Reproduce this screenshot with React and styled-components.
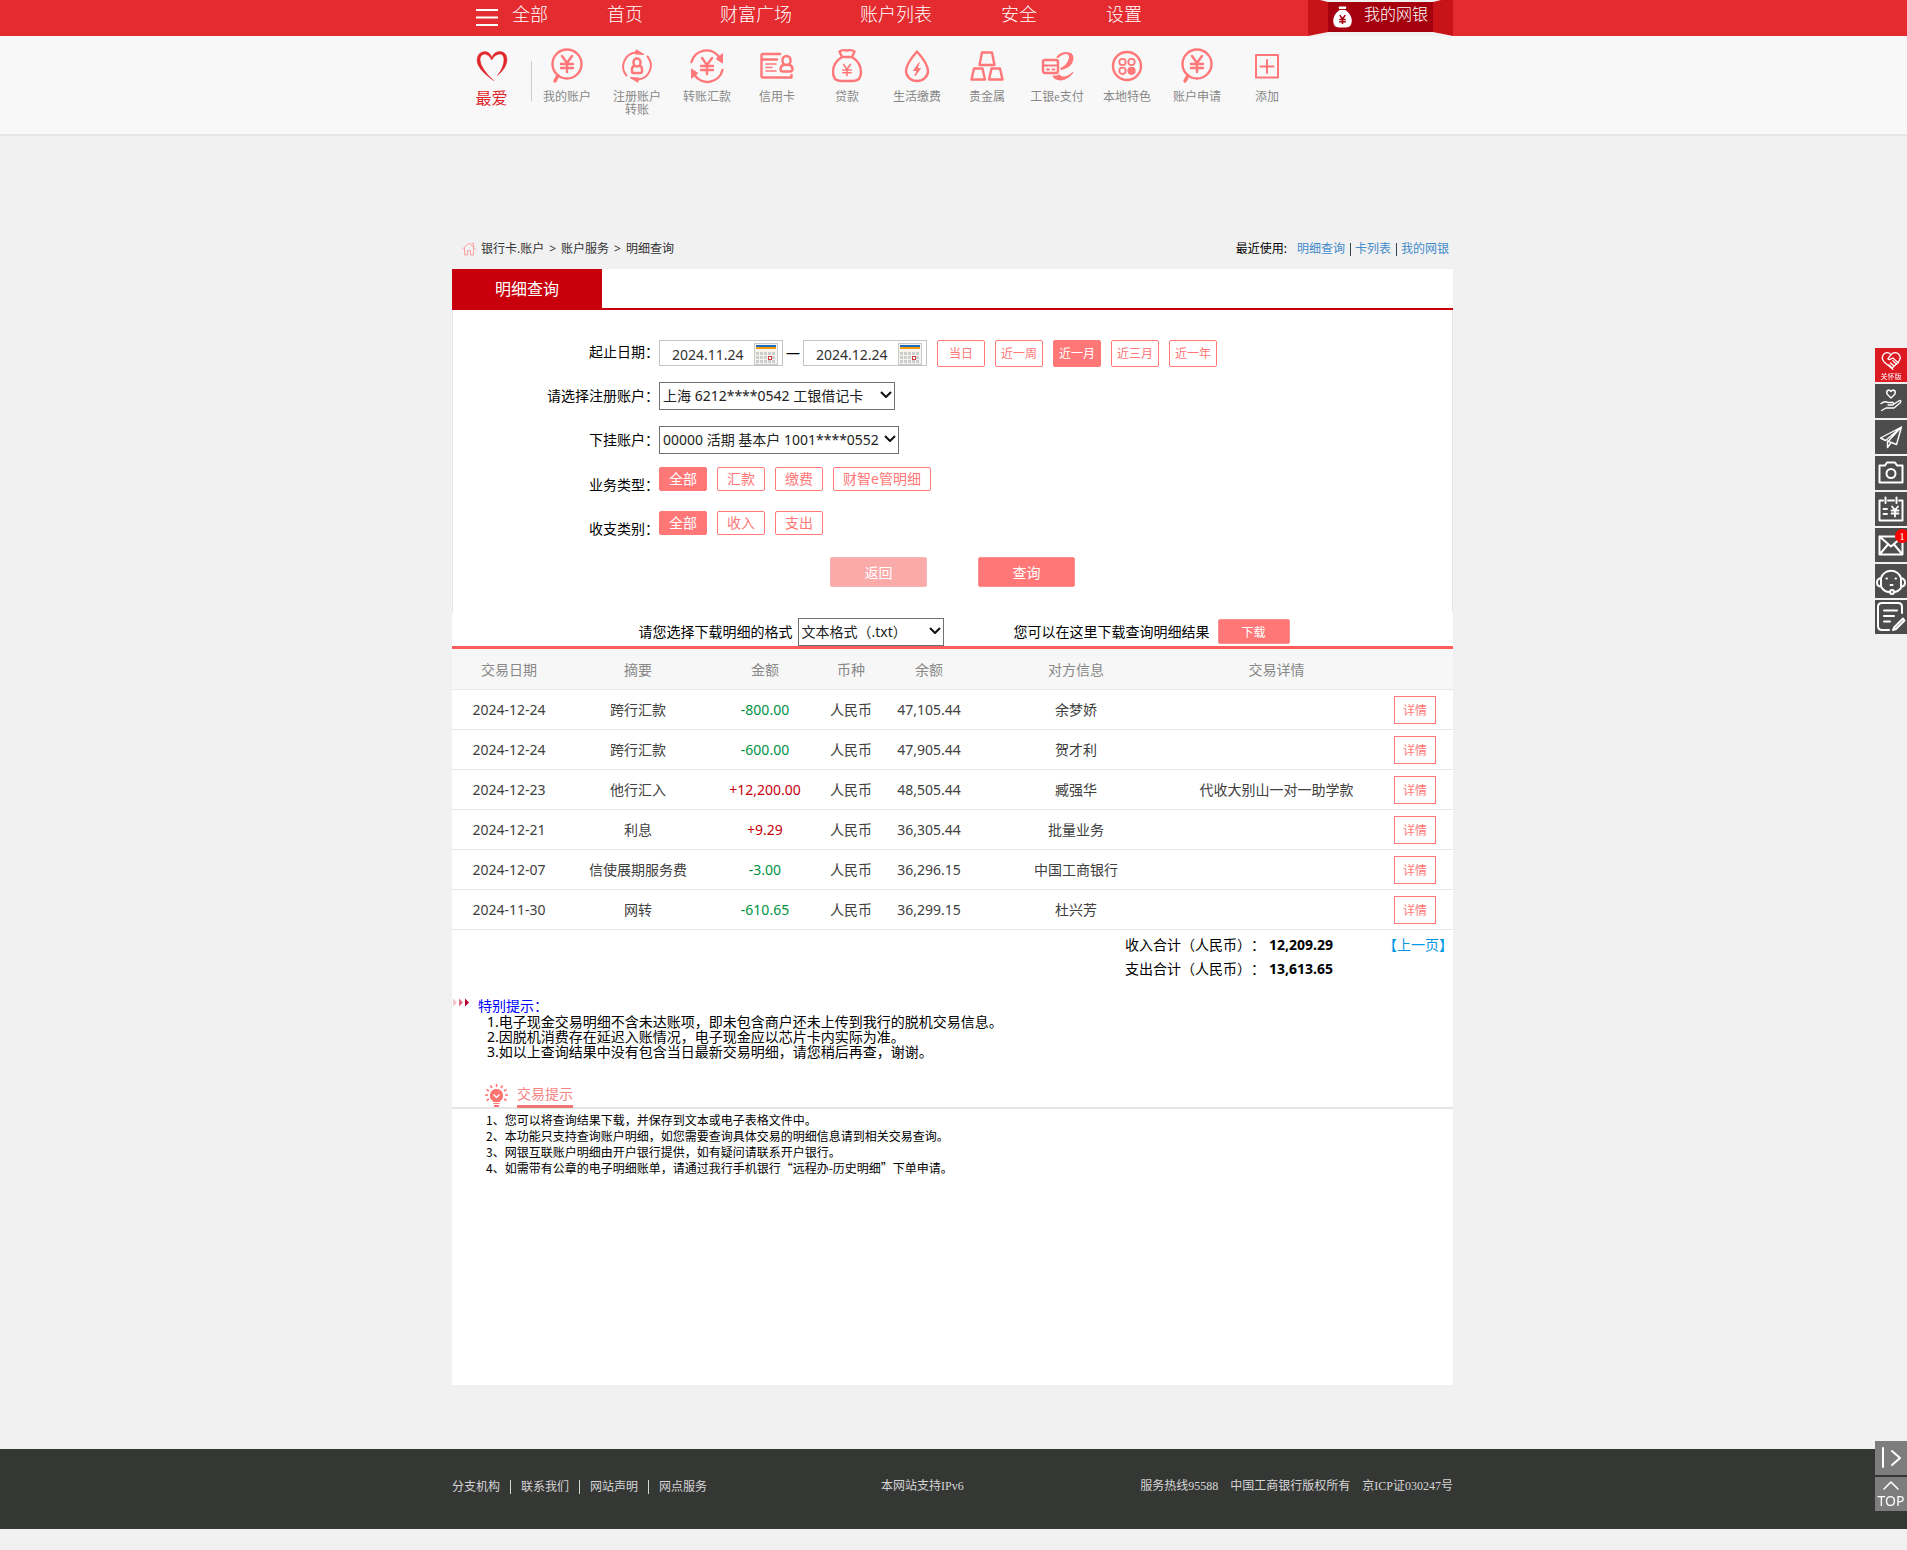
import React from 'react';
import styled, { createGlobalStyle, css } from 'styled-components';

const sans = '"Noto Sans", "Noto Sans CJK SC", sans-serif';
const song = '"Liberation Serif", "Noto Sans CJK SC", serif';

const GlobalStyle = createGlobalStyle`
  *, *::before, *::after { box-sizing: border-box; }
  body {
    margin: 0;
    background: #f1f1f1;
    color: #000;
    font: 14px/20px ${sans};
    text-spacing-trim: space-all;
  }
  button, input, select { font-family: inherit; }
  a { text-decoration: none; }
`;

/* ---------- shared ---------- */

const Container = styled.div`
  width: 1003px;
  max-width: 100%;
  margin: 0 auto;
  padding-right: 2px;
`;

const Icon = styled.svg`
  display: block;
  flex: none;
  fill: none;
  stroke: currentColor;
  stroke-linecap: ${(p) => (p.$flat ? 'butt' : 'round')};
  stroke-linejoin: round;
  stroke-width: ${(p) => p.$stroke || 2};
`;

/* ---------- top bar ---------- */

const TopBar = styled.header`
  background: #e42b2f;
  color: #fff;
  font-family: ${song};
  font-weight: 300;
`;

const TopInner = styled(Container)`
  display: flex;
  justify-content: space-between;
  height: 36px;
`;

const MainNav = styled.nav`
  display: grid;
  grid-template-columns: 36px 95px 113px 140px 141px 105px auto;
  padding-left: 24px;
  line-height: 30px;
`;

const MenuButton = styled.button`
  width: 22px;
  height: 36px;
  padding: 0;
  border: 0;
  background: none;
  color: #fff;
  cursor: pointer;
`;

const MainLink = styled.a`
  color: #fff;
  font-size: 18px;
  white-space: nowrap;
`;

const MyBank = styled.a`
  position: relative;
  display: flex;
  gap: 12px;
  width: 145px;
  height: 36px;
  padding-left: 25px;
  color: #fff;
  font-size: 16px;
  line-height: 30px;
`;

const Ribbon = styled.svg`
  position: absolute;
  inset: 0;
`;

const BagSlot = styled.span`
  position: relative;
  padding-top: 6px;
`;

const MyBankText = styled.span`
  position: relative;
`;

/* ---------- quick links ---------- */

const QuickBar = styled.div`
  height: 100px;
  background: #f8f8f8;
  border-bottom: 2px solid #e5e5e5;
  font-family: ${song};
`;

const QuickInner = styled(Container)`
  display: flex;
`;

const Favorite = styled.a`
  display: flex;
  flex-direction: column;
  align-items: center;
  gap: 8px;
  width: 79px;
  padding: 14px 0 0;
  color: #e0262b;
  font-size: 16px;
`;

const Divider = styled.span`
  width: 1px;
  height: 40px;
  margin-top: 25px;
  background: #ccc;
`;

const QuickLink = styled.a`
  display: flex;
  flex-direction: column;
  align-items: center;
  gap: 7px;
  width: 70px;
  padding-top: 12px;
  color: #ff7778;
`;

const QuickText = styled.span`
  color: #888;
  font-size: 12px;
  line-height: 13px;
  text-align: center;
  white-space: pre-line;
`;

/* ---------- breadcrumb ---------- */

const CrumbBar = styled.div`
  display: flex;
  justify-content: space-between;
  align-items: center;
  height: 42px;
  margin-top: 91px;
  padding: 2px 4px 0 10px;
  font-size: 12px;
`;

const Crumbs = styled.nav`
  display: flex;
  align-items: center;
  gap: 5px;
  color: #333;
`;

const HomeLink = styled.a`
  color: #ffa0a0;
`;

const Recent = styled.div`
  display: flex;
  align-items: center;
`;

const RecentTitle = styled.span`
  margin-right: 10px;
`;

const RecentLink = styled.a`
  color: #428bca;
  & + & {
    margin-left: 5px;
    padding-left: 5px;
    background: linear-gradient(#345, #345) left center / 1px 13px no-repeat;
  }
`;

/* ---------- panel ---------- */

const Panel = styled.main`
  padding-bottom: 209px;
  background: #fff;
`;

const Tabs = styled.div`
  display: flex;
  border-bottom: 2px solid #c7000b;
`;

const Tab = styled.h1`
  width: 150px;
  height: 39px;
  margin: 0;
  background: #c7000b;
  color: #fff;
  font-size: 16px;
  font-weight: 400;
  line-height: 41px;
  text-align: center;
`;

const Form = styled.form`
  padding: 20px 0 26px;
  border: solid #e5e5e5;
  border-width: 0 1px;
`;

const Row = styled.div`
  display: grid;
  grid-template-columns: 206px 1fr;
  height: 44px;
`;

const labelStyle = css`
  line-height: 44px;
  text-align: right;
`;
const RowLabel = styled.label`${labelStyle}`;
const RowTitle = styled.span`
  ${labelStyle}
  line-height: 46px;
`;

const Controls = styled.div`
  display: flex;
  align-items: ${(p) => (p.$top ? 'flex-start' : 'center')};
  gap: 10px;
  padding-top: ${(p) => p.$top || 0}px;
`;

const DateRange = styled.div`
  display: flex;
  align-items: center;
  gap: 3px;
`;

const DateBox = styled.div`
  display: flex;
  width: 124px;
  height: 26px;
  border: 1px solid #c4c4c4;
`;

const DateInput = styled.input`
  width: 94px;
  padding: 2px 0 0 12px;
  border: 0;
  background: none;
  color: #333;
  font-size: 14px;
`;

const CalendarButton = styled.button`
  display: flex;
  align-items: flex-end;
  padding: 0;
  border: 0;
  background: none;
`;

const Pill = styled.button`
  min-width: 48px;
  height: ${(p) => (p.$small ? 27 : 24)}px;
  padding: 0 ${(p) => (p.$small ? 4 : 9)}px;
  border: 1px solid #ff7777;
  border-radius: 2px;
  background: ${(p) => (p.$active ? '#ff7777' : '#fff')};
  color: ${(p) => (p.$active ? '#fff' : '#ff7777')};
  font-size: ${(p) => (p.$small ? 12 : 14)}px;
  line-height: 20px;
  white-space: nowrap;
`;

const SelectBox = styled.div`
  position: relative;
  width: ${(p) => p.$width}px;
`;

const SelectInput = styled.select`
  display: block;
  width: 100%;
  height: 28px;
  padding: 0 0 1px 3px;
  border: 1px solid #707070;
  border-radius: 0;
  appearance: none;
  background: #fff;
  color: #222;
  font-size: 14px;
`;

const SelectArrow = styled(Icon)`
  position: absolute;
  top: 8px;
  right: 3px;
  color: #111;
  pointer-events: none;
`;

const Actions = styled.div`
  display: flex;
  justify-content: center;
  gap: 51px;
  margin-top: 7px;
`;

const SolidButton = styled.button`
  width: ${(p) => (p.$small ? 72 : 97)}px;
  height: ${(p) => (p.$small ? 25 : 30)}px;
  padding: 0;
  border: 1px solid ${(p) => (p.$muted ? '#f9b4b4' : '#ff9090')};
  border-radius: 2px;
  background: ${(p) => (p.$muted ? '#fbaaaa' : '#ff7777')};
  color: #fff;
  font-size: ${(p) => (p.$small ? 12 : 14)}px;
`;

const DownloadBar = styled.div`
  display: flex;
  align-items: flex-start;
  justify-content: center;
  gap: 70px;
  height: 33px;
  padding: 5px 0 0 23px;
`;

const DownloadGroup = styled.div`
  display: flex;
  align-items: center;
  gap: ${(p) => p.$gap}px;
  min-height: 27px;
`;

/* ---------- table ---------- */

const Table = styled.table`
  width: 100%;
  border-top: 3px solid #ff5c5c;
  border-spacing: 0;
  table-layout: fixed;
  color: #404040;
  text-align: center;
`;

const Th = styled.th`
  height: 41px;
  padding: 2px 0 0;
  border-bottom: 1px solid #e8e8e8;
  background: #f7f7f7;
  color: #888;
  font-weight: 400;
`;

const Td = styled.td`
  height: 40px;
  padding: 0;
  border-bottom: 1px solid #e8e8e8;
  color: ${(p) => p.$color || 'inherit'};
`;

const DetailButton = styled.button`
  width: 42px;
  height: 28px;
  padding: 0;
  border: 1px solid #ff7777;
  background: #fff;
  color: #ff7777;
  font-size: 12px;
  vertical-align: middle;
`;

const Totals = styled.div`
  display: flex;
  justify-content: flex-end;
  gap: 50px;
  padding-top: 3px;
  line-height: 24px;
`;

const TotalList = styled.div`
  strong {
    margin-left: 4px;
    font-weight: 700;
  }
`;

const PrevLink = styled.a`
  color: #0099e5;
`;

/* ---------- tips ---------- */

const Notice = styled.section`
  display: flex;
  gap: 8px;
  margin-top: 17px;
  line-height: 15px;
`;

const NoticeTitle = styled.h2`
  margin: 0;
  padding-bottom: 1px;
  color: #00f;
  font-size: 14px;
  font-weight: 400;
  line-height: 15px;
`;

const NoticeLines = styled.div`
  padding-left: 9px;
`;

const TipHead = styled.div`
  display: flex;
  gap: 9px;
  height: 25px;
  margin-top: 25px;
  padding-left: 33px;
  border-bottom: 2px solid #e5e5e5;
`;

const TipTitle = styled.h2`
  height: 24px;
  margin: 0;
  border-bottom: 3px solid #ef7474;
  color: #f58585;
  font-size: 14px;
  font-weight: 400;
  line-height: 20px;
`;

const TipLines = styled.div`
  padding: 3px 0 0 34px;
  font-family: "Noto Sans CJK SC", sans-serif;
  font-size: 12px;
  line-height: 16px;
`;

/* ---------- footer ---------- */

const Footer = styled.footer`
  margin: 64px 0 21px;
  background: #353735;
  color: #d5d5d5;
  font-family: ${song};
  font-size: 12px;
`;

const FooterInner = styled(Container)`
  display: grid;
  grid-template-columns: 429px 1fr auto;
  align-items: center;
  height: 80px;
  padding-bottom: 6px;
`;

const FooterLinks = styled.nav`
  display: flex;
  padding-top: 2px;
  line-height: 14px;
`;

const FooterLink = styled.a`
  color: inherit;
  & + & {
    margin-left: 10px;
    padding-left: 10px;
    border-left: 1px solid #d5d5d5;
  }
`;

const Legal = styled.div`
  display: flex;
  justify-content: flex-end;
  gap: 12px;
`;

/* ---------- side rail ---------- */

const Rail = styled.div`
  position: fixed;
  right: 0;
  display: flex;
  flex-direction: column;
  gap: 2px;
  ${(p) => (p.$bottom ? 'bottom: 39px;' : 'top: 348px;')}
`;

const RailButton = styled.button`
  position: relative;
  display: flex;
  flex-direction: column;
  align-items: center;
  justify-content: center;
  width: 32px;
  height: 34px;
  padding: 0;
  border: 0;
  background: ${(p) => p.$bg || '#4d4d4d'};
  color: #fff;
`;

const RailText = styled.span`
  font-size: ${(p) => p.$size}px;
  line-height: ${(p) => p.$size}px;
  white-space: nowrap;
`;

const Badge = styled.span`
  position: absolute;
  top: 1px;
  right: -2px;
  width: 14px;
  height: 14px;
  border-radius: 50%;
  background: #f00;
  font: 11px/14px ${song};
`;

/* ---------- drawings ---------- */

const Yen = ({ x = 18, y = 16, s = 1, w }) => (
  <path
    strokeWidth={w}
    d={`M${x - 5 * s} ${y - 8 * s}L${x} ${y - s}L${x + 5 * s} ${y - 8 * s}M${x} ${y - s}V${y + 8 * s}M${x - 6 * s} ${y}H${x + 6 * s}M${x - 6 * s} ${y + 4 * s}H${x + 6 * s}`}
  />
);

const quickArt = {
  search: (
    <>
      <circle cx="18" cy="16" r="14.5" />
      <path d="M9 27.500L6 33" strokeWidth="3.500" />
      <Yen />
    </>
  ),
  register: (
    <>
      <path d="M7.500 27.500A14 14 0 0 1 17 4.500M28.500 8.500A14 14 0 0 1 19 31.500" strokeWidth="2" />
      <path d="M17.500 2L25 6.500L16.500 6ZM18.500 34L11 29.500L19.500 30Z" fill="currentColor" strokeWidth="1" />
      <rect x="14.500" y="10.500" width="7" height="8" rx="3.500" />
      <path d="M15.500 18Q13 18.500 13 21V23.500Q13 25 14.500 25H21.500Q23 25 23 23.500V21Q23 18.500 20.500 18" />
    </>
  ),
  transfer: (
    <>
      <path d="M2.500 14A15.500 15.500 0 0 1 30.500 9.500M33.500 22A15.500 15.500 0 0 1 5.500 27" />
      <path d="M33.500 6V15L27.500 11ZM2.500 30V21L8.500 25Z" fill="currentColor" strokeWidth="1" />
      <Yen y={18} />
    </>
  ),
  card: (
    <>
      <path d="M21 6H4Q2.500 6 2.500 7.500V28Q2.500 29.500 4 29.500H32.500V27M3 11.500H18" />
      <path d="M7 16H17M7 19.500H13M7 23H17" strokeWidth="1.600" />
      <rect x="23.500" y="8" width="8" height="9" rx="4" />
      <path d="M24.500 17Q21.500 18 21.500 21Q21.500 23.500 24 23.500H31Q33.500 23.500 33.500 21Q33.500 18 30.500 17" />
    </>
  ),
  loan: (
    <>
      <path d="M13 9L10.500 3.500Q13 1.500 18 2.500Q23 1.500 25.500 3.500L23 9ZM13 9Q4 14.500 4 24Q4 33 12 33H24Q32 33 32 24Q32 14.500 23 9" />
      <Yen y={22} s={0.7} w={1.6} />
    </>
  ),
  drop: (
    <>
      <path d="M18 3.500Q7 16 7 23A11 10 0 0 0 29 23Q29 16 18 3.500Z" />
      <path d="M20 15L14.500 22.500H18L16 28L21.500 20.500H18.500Z" fill="currentColor" strokeWidth="1" />
    </>
  ),
  gold: (
    <path d="M13 4.500H23L25.500 17H10.500ZM5 20.500H13.500L16 31.500H2.500ZM22.500 20.500H31L33.500 31.500H20Z" />
  ),
  epay: (
    <>
      <g fill="currentColor" stroke="none">
        <path d="M15 13Q19 4 27 4Q34.500 4 34.500 10Q34 20 20 22.500V20.500Q28 18 30 10Q30.500 6 26.500 6Q21 6.500 17 13Z" />
        <path d="M13 26Q14 32.500 22 32.500Q29 32 34.500 24.500L33.500 24Q29 28.500 24 28.500Q20 28 20 24Z" />
      </g>
      <rect x="4" y="12" width="15" height="13" rx="2" fill="#f8f8f8" stroke="#f8f8f8" strokeWidth="5" />
      <rect x="4" y="12" width="15" height="13" rx="2" />
      <path d="M4 17.500H19M8 21.500H10M13.500 21.500H15.500" strokeWidth="2" />
    </>
  ),
  local: (
    <>
      <circle cx="18" cy="18" r="14" />
      <g strokeWidth="1.800">
        <circle cx="13.500" cy="14" r="3.200" />
        <circle cx="22.500" cy="14" r="3.200" />
        <circle cx="13.500" cy="22.800" r="3.200" />
        <circle cx="22.500" cy="22.800" r="3.200" fill="currentColor" />
      </g>
    </>
  ),
  add: <path d="M7 7H29V29.500H7ZM18 12V25M11.500 18.500H24.500" strokeWidth="2" />,
};

const QuickIcon = ({ name }) => (
  <Icon width="36" height="36" viewBox="0 0 36 36" $stroke={2.4}>{quickArt[name]}</Icon>
);

const Calendar = () => (
  <svg width="24" height="22" viewBox="0 0 24 22">
    <rect x="0.500" y="0.500" width="23" height="21" fill="#f6f4ee" stroke="#c9c9c9" />
    <rect x="2" y="2" width="20" height="2" fill="#1c6fb8" />
    <rect x="2" y="4" width="20" height="2" fill="#f39c12" />
    {[9, 13, 17].map((y) =>
      [2, 6, 10, 14, 18].map((x) => <rect key={`${x}-${y}`} x={x} y={y} width="3" height="3" fill="#cdcdcd" />)
    )}
    <rect x="14.500" y="13.500" width="3" height="3" fill="#fff" stroke="#d33c3c" />
  </svg>
);

const railArt = {
  care: (
    <>
      <path d="M14 20L4.500 12Q0.500 7 4.500 3Q8.500 0 12 4Q15.500 0 20 3Q24 7 20 12L13 19" />
      <path d="M12 4L8.500 8.500Q10.500 10.500 14 7.500L20 13M11.500 13L15 16M9.500 15L13 18M14 10.500L18 14.500" />
    </>
  ),
  hand: (
    <>
      <path d="M12 9L8 5Q7 2 9.500 1Q11 1 12 2.500Q13 1 14.500 1Q17 2 16 5Z" />
      <path d="M2 14.500Q6 11.500 9 13.500H14Q15.500 15 13.500 16H9M15 15L20.500 11.500Q22.500 11.500 21.500 13.500L15 19H7L2.500 21.500" />
    </>
  ),
  plane: <path d="M22.500 2L1.500 13L6.500 15.500L22.500 2L8.500 17V22.500L11.500 18.500M22.500 2L17.500 19.500L8.500 16" />,
  camera: (
    <>
      <path d="M0.500 4.500H6L8 1.500H16L18 4.500H23.500V21.500H0.500Z" />
      <circle cx="12" cy="12.500" r="4.500" />
    </>
  ),
  calendar: (
    <>
      <path d="M4 3.500H0.500V23.500H23.500V3.500H20M9 3.500H15M6.500 0.500V6M17.500 0.500V6" />
      <path d="M4.500 12H8M4.500 17H8M13 9.500L16 13L19 9.500M16 13V19.500M12.500 13.500H19.500M12.500 16.500H19.500" strokeWidth="1.800" />
    </>
  ),
  mail: <path d="M0.500 3.500H23.500V21.500H0.500ZM0.500 3.500L12 13.500L23.500 3.500M1 21L8.500 12M23 21L15.500 12" />,
  service: (
    <>
      <path d="M2 9A10.500 10.500 0 0 1 22 9M2 9Q-2 10 -2 13.500Q-2 17.500 2 17.500ZM22 9Q26 10 26 13.500Q26 17.500 22 17.500ZM2 17.500Q5 23 10.500 23M23 17.500Q20 22.500 15.500 23" />
      <circle cx="13" cy="23" r="2" />
      <path d="M7.500 9.500H8M16.500 9.500H17M11.500 16H13.500" />
    </>
  ),
  edit: (
    <path d="M23 8V2Q23 -2 19 -2H3Q-1 -2 -1 2V21Q-1 25 3 25H10M5 5.500H18M5 11H15M5 16.500H11M24 13.500L15.500 22L14 25L17 24L25.500 15.500Z" />
  ),
};

const thinArt = ['hand', 'plane', 'care'];

const RailIcon = ({ name, size = 24 }) => (
  <Icon width={size} height={size} viewBox="0 0 24 24" overflow="visible" $stroke={thinArt.includes(name) ? 1.4 : 2}>
    {railArt[name]}
  </Icon>
);

/* ---------- data ---------- */

const mainLinks = ['全部', '首页', '财富广场', '账户列表', '安全', '设置'];

const quickLinks = [
  ['search', '我的账户'],
  ['register', '注册账户\n转账'],
  ['transfer', '转账汇款'],
  ['card', '信用卡'],
  ['loan', '贷款'],
  ['drop', '生活缴费'],
  ['gold', '贵金属'],
  ['epay', '工银e支付'],
  ['local', '本地特色'],
  ['search', '账户申请'],
  ['add', '添加'],
];

const columns = [
  ['交易日期', 114], ['摘要', 144], ['金额', 110], ['币种', 62],
  ['余额', 94], ['对方信息', 200], ['交易详情', 201], ['', 76],
];

const records = [
  ['2024-12-24', '跨行汇款', '-800.00', '47,105.44', '余梦娇', ''],
  ['2024-12-24', '跨行汇款', '-600.00', '47,905.44', '贺才利', ''],
  ['2024-12-23', '他行汇入', '+12,200.00', '48,505.44', '臧强华', '代收大别山一对一助学款'],
  ['2024-12-21', '利息', '+9.29', '36,305.44', '批量业务', ''],
  ['2024-12-07', '信使展期服务费', '-3.00', '36,296.15', '中国工商银行', ''],
  ['2024-11-30', '网转', '-610.65', '36,299.15', '杜兴芳', ''],
];

const railItems = [
  ['hand', '关爱'], ['plane', '发送'], ['camera', '拍照'], ['calendar', '日历'],
  ['mail', '消息'], ['service', '客服'], ['edit', '反馈'],
];

const DateField = ({ id, label, value }) => (
  <DateBox>
    <DateInput id={id} aria-label={label} defaultValue={value} />
    <CalendarButton type="button" aria-label="选择日期"><Calendar /></CalendarButton>
  </DateBox>
);

const Select = ({ id, width, children }) => (
  <SelectBox $width={width}>
    <SelectInput id={id}><option>{children}</option></SelectInput>
    <SelectArrow width="12" height="10" viewBox="0 0 12 10" $flat>
      <path d="M1 2L6 7L11 2" />
    </SelectArrow>
  </SelectBox>
);

const PillRow = ({ title, items }) => (
  <Row role="group" aria-label={title}>
    <RowTitle>{title}：</RowTitle>
    <Controls $top={5}>
      {items.map((t, i) => <Pill type="button" key={t} $active={i === 0}>{t}</Pill>)}
    </Controls>
  </Row>
);

export default function App() {
  return (
    <>
      <GlobalStyle />
      <TopBar>
        <TopInner>
          <MainNav>
            <MenuButton aria-label="菜单">
              <Icon width="22" height="36" viewBox="0 0 22 36" $flat>
                <path d="M0 10H22M0 17.500H22M0 25H22" />
              </Icon>
            </MenuButton>
            {mainLinks.map((t) => <MainLink href="#" key={t}>{t}</MainLink>)}
          </MainNav>
          <MyBank href="#">
            <Ribbon width="145" height="36" viewBox="0 0 145 36">
              <path d="M0 0H145V36H0Z" fill="#c81418" />
              <path d="M12 0H133L125 2H20ZM0 36L20 32H125L145 36Z" fill="#f1f1f1" />
              <path d="M20 2H125V32H20Z" fill="#a5000e" />
            </Ribbon>
            <BagSlot>
              <svg width="19" height="22" viewBox="0 0 19 22">
                <path d="M6 0.500H13Q14 2 12.500 3H6.500Q5 2 6 0.500ZM6.500 4H12.500Q19 9 18.800 15Q18.500 21.500 13 21.500H6Q0.500 21.500 0.200 15Q0 9 6.500 4Z" fill="#fff" />
                <g fill="none" stroke="#a5000e" strokeWidth="1.600"><Yen x={9.5} y={13.5} s={0.55} /></g>
              </svg>
            </BagSlot>
            <MyBankText>我的网银</MyBankText>
          </MyBank>
        </TopInner>
      </TopBar>

      <QuickBar>
        <QuickInner>
          <Favorite href="#">
            <Icon width="32" height="31" viewBox="0 0 32 31" $stroke={0.5}>
              <path
                fill="currentColor"
                d="M17.500 30.500Q1 19 1 10Q1.500 2 9 1.500Q14 2 15.800 7.500Q18 1.500 24 1.500Q31 2 31 10Q30.500 18 21.500 25.500Q28 17 28 9.500Q27.500 4 24 4Q18.500 4.500 15.800 10Q13 4.500 9 4Q4 4.500 4 10Q4.500 18.500 17.500 30.500Z"
              />
            </Icon>
            最爱
          </Favorite>
          <Divider />
          {quickLinks.map(([icon, text]) => (
            <QuickLink href="#" key={text}>
              <QuickIcon name={icon} />
              <QuickText>{text}</QuickText>
            </QuickLink>
          ))}
        </QuickInner>
      </QuickBar>

      <Container>
        <CrumbBar>
          <Crumbs>
            <HomeLink href="#" aria-label="首页">
              <Icon width="14" height="14" viewBox="0 0 14 14" $stroke={1}>
                <path d="M0.500 7L7 1L13.500 7M2.500 6V13H5.500V8.500H8.500V13H11.500V6M11.500 4.500V1.500H10" />
              </Icon>
            </HomeLink>
            <span>银行卡.账户</span>
            <span>&gt;</span>
            <span>账户服务</span>
            <span>&gt;</span>
            <span>明细查询</span>
          </Crumbs>
          <Recent>
            <RecentTitle>最近使用:</RecentTitle>
            <RecentLink href="#">明细查询</RecentLink>
            <RecentLink href="#">卡列表</RecentLink>
            <RecentLink href="#">我的网银</RecentLink>
          </Recent>
        </CrumbBar>

        <Panel>
          <Tabs><Tab>明细查询</Tab></Tabs>

          <Form onSubmit={(e) => e.preventDefault()}>
            <Row>
              <RowLabel htmlFor="from">起止日期：</RowLabel>
              <Controls $top={10}>
                <DateRange>
                  <DateField id="from" label="开始日期" value="2024.11.24" />
                  <span>—</span>
                  <DateField id="to" label="结束日期" value="2024.12.24" />
                </DateRange>
                {['当日', '近一周', '近一月', '近三月', '近一年'].map((t) => (
                  <Pill type="button" key={t} $small $active={t === '近一月'}>{t}</Pill>
                ))}
              </Controls>
            </Row>
            <Row>
              <RowLabel htmlFor="account">请选择注册账户：</RowLabel>
              <Controls>
                <Select id="account" width={236}>上海 6212****0542 工银借记卡</Select>
              </Controls>
            </Row>
            <Row>
              <RowLabel htmlFor="sub">下挂账户：</RowLabel>
              <Controls>
                <Select id="sub" width={240}>00000 活期 基本户 1001****0552</Select>
              </Controls>
            </Row>
            <PillRow title="业务类型" items={['全部', '汇款', '缴费', '财智e管明细']} />
            <PillRow title="收支类别" items={['全部', '收入', '支出']} />
            <Actions>
              <SolidButton type="button" $muted>返回</SolidButton>
              <SolidButton type="submit">查询</SolidButton>
            </Actions>
          </Form>

          <DownloadBar>
            <DownloadGroup $gap={5}>
              <label htmlFor="format">请您选择下载明细的格式</label>
              <Select id="format" width={146}>文本格式（.txt）</Select>
            </DownloadGroup>
            <DownloadGroup $gap={8}>
              <span>您可以在这里下载查询明细结果</span>
              <SolidButton type="button" $small>下载</SolidButton>
            </DownloadGroup>
          </DownloadBar>

          <Table>
            <colgroup>{columns.map(([t, w]) => <col key={t} width={w} />)}</colgroup>
            <thead>
              <tr>{columns.map(([t]) => <Th key={t}>{t}</Th>)}</tr>
            </thead>
            <tbody>
              {records.map(([date, memo, amount, balance, party, detail]) => (
                <tr key={balance}>
                  <Td>{date}</Td>
                  <Td>{memo}</Td>
                  <Td $color={amount[0] === '+' ? '#c7000b' : '#00923f'}>{amount}</Td>
                  <Td>人民币</Td>
                  <Td>{balance}</Td>
                  <Td>{party}</Td>
                  <Td>{detail}</Td>
                  <Td><DetailButton type="button">详情</DetailButton></Td>
                </tr>
              ))}
            </tbody>
          </Table>

          <Totals>
            <TotalList>
              <div>收入合计（人民币）：<strong>12,209.29</strong></div>
              <div>支出合计（人民币）：<strong>13,613.65</strong></div>
            </TotalList>
            <PrevLink href="#">【上一页】</PrevLink>
          </Totals>

          <Notice>
            <svg width="18" height="9" viewBox="0 0 18 9">
              <path d="M1 0.500L5 4.500L1 8.500Z" fill="#f3c3cc" />
              <path d="M7 0.500L11 4.500L7 8.500Z" fill="#dd6a80" />
              <path d="M13 0.500L17 4.500L13 8.500Z" fill="#b5002a" />
            </svg>
            <div>
              <NoticeTitle>特别提示：</NoticeTitle>
              <NoticeLines>
                <div>1.电子现金交易明细不含未达账项，即未包含商户还未上传到我行的脱机交易信息。</div>
                <div>2.因脱机消费存在延迟入账情况，电子现金应以芯片卡内实际为准。</div>
                <div>3.如以上查询结果中没有包含当日最新交易明细，请您稍后再查，谢谢。</div>
              </NoticeLines>
            </div>
          </Notice>

          <TipHead>
            <svg width="23" height="23" viewBox="0 0 23 23" fill="#ff7370">
              <path d="M11.500 5A6.500 6.500 0 0 1 15 17V18H8V17A6.500 6.500 0 0 1 11.500 5ZM8.500 19H14.500V20H8.500ZM9 21H14V23H9Z" />
              <path d="M8.500 10.500L11.500 13.500L14.500 10.500" fill="none" stroke="#fff" strokeWidth="1.400" />
              <path d="M11.500 0V3M5.500 1.500L7 4M17.500 1.500L16 4M1.500 5.500L4 7M21.500 5.500L19 7M0 11H3M20 11H23M1.500 16.500L4 15M21.500 16.500L19 15" stroke="#ff7370" strokeWidth="1.500" />
            </svg>
            <TipTitle>交易提示</TipTitle>
          </TipHead>
          <TipLines>
            <div>1、您可以将查询结果下载，并保存到文本或电子表格文件中。</div>
            <div>2、本功能只支持查询账户明细，如您需要查询具体交易的明细信息请到相关交易查询。</div>
            <div>3、网银互联账户明细由开户银行提供，如有疑问请联系开户银行。</div>
            <div>4、如需带有公章的电子明细账单，请通过我行手机银行“远程办-历史明细”下单申请。</div>
          </TipLines>
        </Panel>
      </Container>

      <Footer>
        <FooterInner>
          <FooterLinks>
            {['分支机构', '联系我们', '网站声明', '网点服务'].map((t) => <FooterLink href="#" key={t}>{t}</FooterLink>)}
          </FooterLinks>
          <span>本网站支持IPv6</span>
          <Legal>
            <span>服务热线95588</span>
            <span>中国工商银行版权所有</span>
            <span>京ICP证030247号</span>
          </Legal>
        </FooterInner>
      </Footer>

      <Rail>
        <RailButton $bg="#dc1a22">
          <RailIcon name="care" size={22} />
          <RailText $size={7}>关怀版</RailText>
        </RailButton>
        {railItems.map(([icon, label]) => (
          <RailButton key={icon} aria-label={label}>
            <RailIcon name={icon} />
            {icon === 'mail' && <Badge>1</Badge>}
          </RailButton>
        ))}
      </Rail>
      <Rail $bottom>
        <RailButton $bg="#7d7d7d" aria-label="收起">
          <Icon width="32" height="34" viewBox="0 0 32 34">
            <path d="M8 7V26M17 10L25 17L17 24" />
          </Icon>
        </RailButton>
        <RailButton $bg="#7d7d7d">
          <Icon width="16" height="14" viewBox="0 0 16 14" $stroke={1.5}>
            <path d="M1 9L8 2L15 9" />
          </Icon>
          <RailText $size={14}>TOP</RailText>
        </RailButton>
      </Rail>
    </>
  );
}
